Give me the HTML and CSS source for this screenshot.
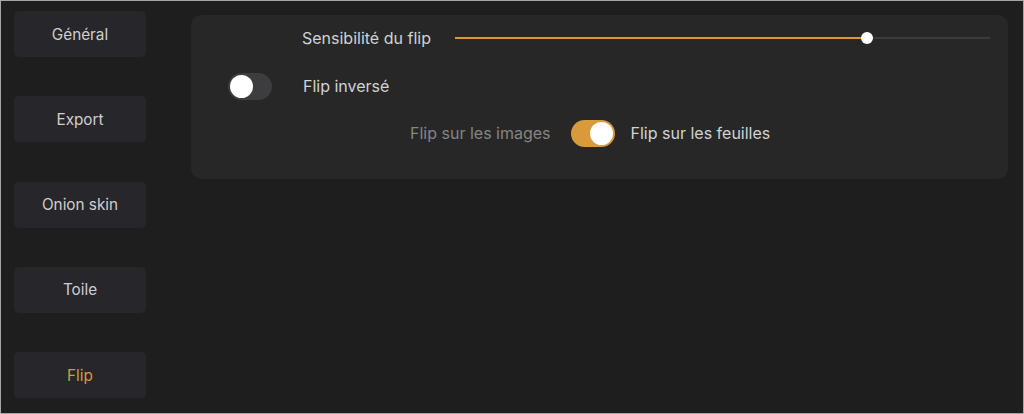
FILE: index.html
```html
<!DOCTYPE html>
<html lang="fr">
<head>
<meta charset="utf-8">
<link rel="stylesheet" href="styles.css">
</head>
<body>
<div class="frame">
  <nav class="sidebar">
    <div class="tab">Général</div>
    <div class="tab">Export</div>
    <div class="tab">Onion skin</div>
    <div class="tab">Toile</div>
    <div class="tab active">Flip</div>
  </nav>
  <main class="content">
    <section class="panel">
      <div class="row row-slider">
        <span class="label slider-label">Sensibilité du flip</span>
        <div class="slider">
          <div class="fill" style="width:77%"></div>
          <div class="thumb" style="left:77%"></div>
        </div>
      </div>
      <div class="row row-toggle">
        <div class="toggle off"><span class="knob"></span></div>
        <span class="label">Flip inversé</span>
      </div>
      <div class="row row-choice">
        <span class="label dim">Flip sur les images</span>
        <div class="toggle on"><span class="knob"></span></div>
        <span class="label">Flip sur les feuilles</span>
      </div>
    </section>
  </main>
</div>
</body>
</html>
```
FILE: styles.css
```css
* { box-sizing: border-box; }
html, body { margin: 0; padding: 0; }
body {
  background: #1e1e1e;
  font-family: Inter, "Noto Sans", sans-serif;
  font-size: 16px;
  color: #d2d2d2;
}
.frame {
  width: 1024px;
  height: 414px;
  border: 1px solid #a6a6a6;
  background: #1e1e1e;
  display: flex;
  padding: 10px 0 15px 13px;
}
.sidebar {
  width: 132px;
  display: flex;
  flex-direction: column;
  justify-content: space-between;
}
.tab {
  height: 46px;
  border-radius: 5px;
  background: #27262b;
  display: flex;
  align-items: center;
  justify-content: center;
  color: #cfcfcf;
  font-size: 15.3px;
}
.tab.active { color: #d59a3a; }
.content {
  flex: 1;
  padding: 4px 15px 0 45px;
}
.panel {
  background: #272727;
  border-radius: 10px;
  height: 164px;
  padding: 9px 18px 0 0;
}
.row {
  display: flex;
  align-items: center;
  height: 28px;
}
.row-slider { padding-left: 111px; }
.slider-label { width: 153px; }
.slider {
  flex: 1;
  height: 2px;
  background: #3b3b3b;
  position: relative;
}
.fill {
  height: 100%;
  background: #d99a33;
}
.thumb {
  position: absolute;
  top: 50%;
  width: 12px;
  height: 12px;
  border-radius: 50%;
  background: #fff;
  transform: translate(-50%, -50%);
}
.row-toggle { margin-top: 20px; padding-left: 37px; }
.row-toggle .toggle { margin-right: 31px; }
.row-choice { margin-top: 19px; padding-left: 219px; }
.row-choice .toggle { margin: 0 16px 0 20px; }
.label { white-space: nowrap; }
.dim { color: #858585; }
.toggle {
  width: 44px;
  height: 27px;
  border-radius: 14px;
  display: flex;
  align-items: center;
  padding: 0 2px;
}
.toggle.off { background: #3d3d40; justify-content: flex-start; }
.toggle.on { background: #d99a3c; justify-content: flex-end; }
.knob {
  width: 23px;
  height: 23px;
  border-radius: 50%;
  background: #fff;
}
```
